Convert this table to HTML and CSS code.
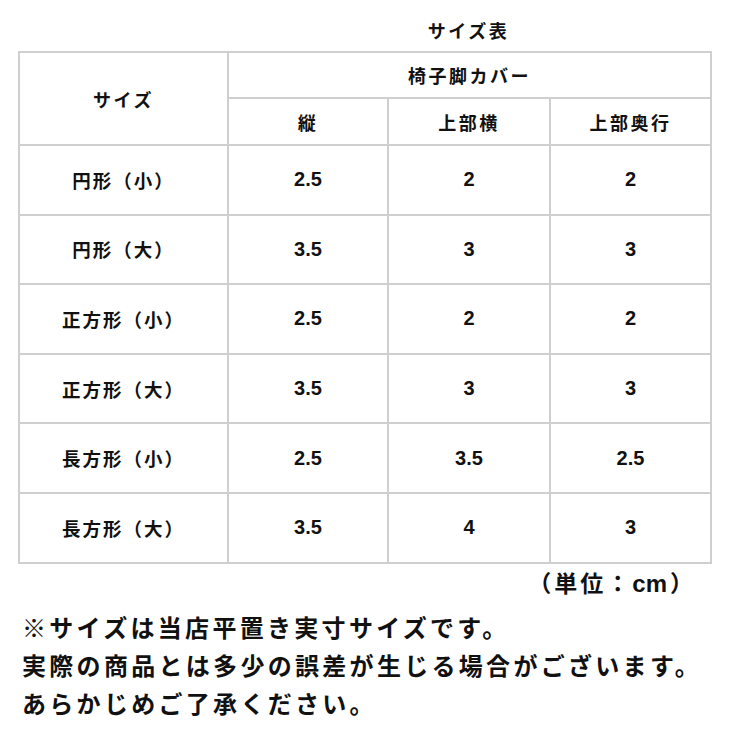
FILE: index.html
```html
<!DOCTYPE html>
<html lang="ja">
<head>
<meta charset="utf-8">
<link rel="stylesheet" href="styles.css">
</head>
<body>
<div class="page">
  <div class="title-row">
    <div class="title-spacer"></div>
    <div class="title">サイズ表</div>
  </div>
  <table class="size-table">
    <colgroup>
      <col class="c1"><col class="c2"><col class="c3"><col class="c4">
    </colgroup>
    <tr class="h1">
      <th rowspan="2">サイズ</th>
      <th colspan="3">椅子脚カバー</th>
    </tr>
    <tr class="h2">
      <th>縦</th><th>上部横</th><th>上部奥行</th>
    </tr>
    <tr class="d"><td class="name">円形（小）</td><td>2.5</td><td>2</td><td>2</td></tr>
    <tr class="d"><td class="name">円形（大）</td><td>3.5</td><td>3</td><td>3</td></tr>
    <tr class="d"><td class="name">正方形（小）</td><td>2.5</td><td>2</td><td>2</td></tr>
    <tr class="d"><td class="name">正方形（大）</td><td>3.5</td><td>3</td><td>3</td></tr>
    <tr class="d"><td class="name">長方形（小）</td><td>2.5</td><td>3.5</td><td>2.5</td></tr>
    <tr class="d"><td class="name">長方形（大）</td><td>3.5</td><td>4</td><td>3</td></tr>
  </table>
  <div class="unit">（単位：<span class="unit-cm">cm</span>）</div>
  <div class="notes">
    <p>※サイズは当店平置き実寸サイズです。</p>
    <p>実際の商品とは多少の誤差が生じる場合がございます。</p>
    <p>あらかじめご了承ください。</p>
  </div>
</div>
</body>
</html>
```
FILE: styles.css
```css
html, body {
  margin: 0;
  padding: 0;
  background: #ffffff;
}
body {
  font-family: "Liberation Sans", "Noto Sans CJK JP", sans-serif;
  color: #111111;
}
.page {
  width: 740px;
  padding: 18px 0 0 18px;
  box-sizing: border-box;
}
.title-row {
  display: flex;
  width: 692px;
  height: 33px;
}
.title-spacer {
  width: 209px;
  flex: none;
}
.title {
  flex: 1;
  text-align: center;
  font-family: "Noto Sans CJK JP", sans-serif;
  font-weight: 700;
  font-size: 18px;
  letter-spacing: 2.5px;
  line-height: 24px;
}
.size-table {
  border-collapse: collapse;
  table-layout: fixed;
  width: 692px;
}
.c1 { width: 209px; }
.c2 { width: 160px; }
.c3 { width: 162px; }
.c4 { width: 161px; }
.size-table th,
.size-table td {
  border: 2px solid #cfcfcf;
  padding: 0;
  text-align: center;
  vertical-align: middle;
  font-weight: 700;
}
.size-table th {
  font-family: "Noto Sans CJK JP", sans-serif;
  font-size: 18px;
  letter-spacing: 2.5px;
}
.h1 { height: 46px; }
.h2 { height: 47px; }
.d { height: 69.6px; }
.size-table td {
  font-family: "Liberation Sans", "Noto Sans CJK JP", sans-serif;
  font-size: 20px;
}
.size-table td.name {
  font-family: "Noto Sans CJK JP", sans-serif;
  font-size: 18.5px;
  letter-spacing: 2px;
}
.unit {
  width: 692px;
  box-sizing: border-box;
  padding-right: 14px;
  text-align: right;
  font-family: "Liberation Sans", "Noto Sans CJK JP", sans-serif;
  font-weight: 700;
  font-size: 23px;
  letter-spacing: 3px;
  line-height: 30px;
  margin-top: 5px;
}
.unit-cm {
  letter-spacing: 0;
  font-size: 24px;
  margin-right: 3px;
}
.notes {
  margin-top: 9px;
  margin-left: 4px;
}
.notes p {
  margin: 0;
  font-family: "Noto Sans CJK JP", sans-serif;
  font-weight: 700;
  font-size: 24px;
  letter-spacing: 3.3px;
  line-height: 38px;
  white-space: nowrap;
}
```
